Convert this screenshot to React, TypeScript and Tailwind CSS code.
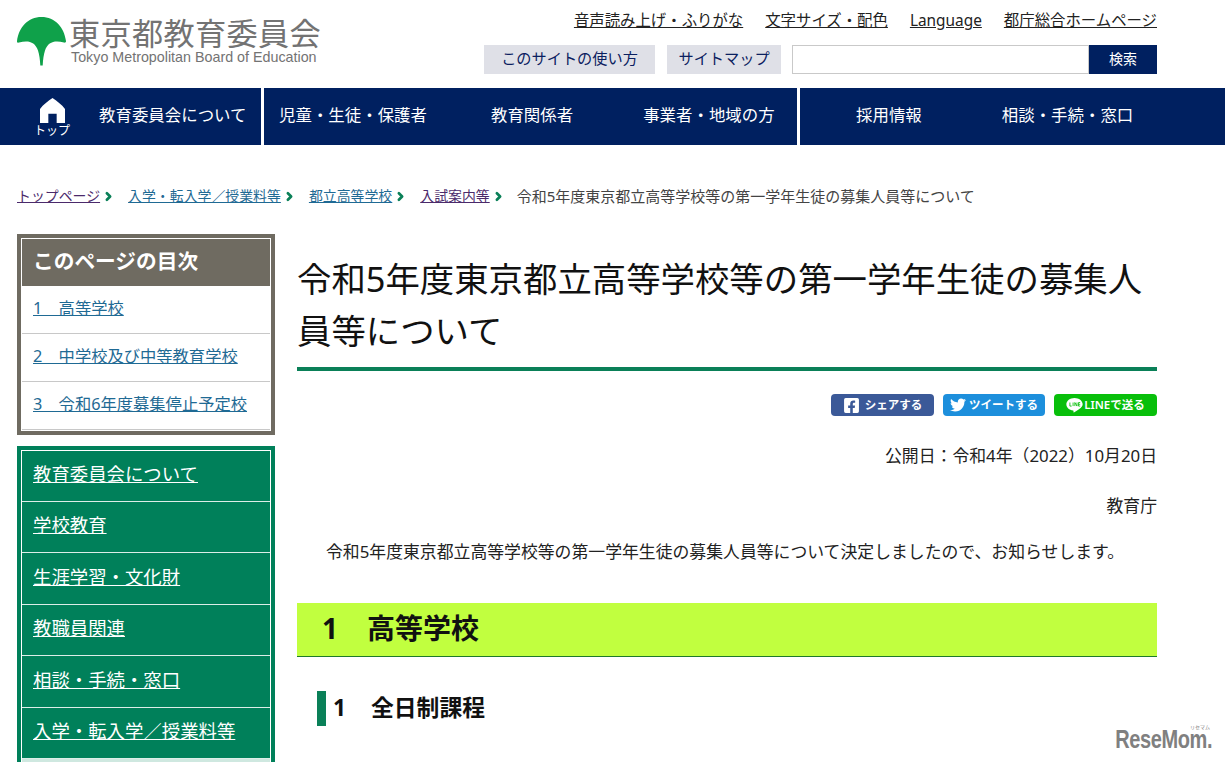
import { ChevronRight } from "lucide-react";
import { FaFacebookSquare, FaTwitter } from "react-icons/fa";

const topLinks = ["音声読み上げ・ふりがな", "文字サイズ・配色", "Language", "都庁総合ホームページ"];
const tocItems = ["1　高等学校", "2　中学校及び中等教育学校", "3　令和6年度募集停止予定校"];
const sideItems = ["教育委員会について", "学校教育", "生涯学習・文化財", "教職員関連", "相談・手続・窓口", "入学・転入学／授業料等"];

const crumbs = [
  { label: "トップページ", color: "text-[#4b2a6b]" },
  { label: "入学・転入学／授業料等", color: "text-[#1f6a94]" },
  { label: "都立高等学校", color: "text-[#1f6a94]" },
  { label: "入試案内等", color: "text-[#4b2a6b]" },
];

function Logo() {
  return (
    <div className="flex items-start pt-[16px]">
      <svg width="50" height="50" viewBox="0 0 50 50" className="shrink-0">
        <path d="M24.5 1C11 1 2 11 0 25c-.2 1.4.8 1.9 2 1.6 9-2.400 16-1 19 8 1.300 4 2 9 2.300 15h2.400c.3-6 1-11 2.300-15 3-9 10-10.400 19-8 1.200.3 2.200-.2 2-1.600C47 11 38 1 24.500 1z" fill="#0fa14a" />
      </svg>
      <div className="ml-[2px] flex flex-col">
        <span className="h-[31px] text-[31.200px] leading-[31px] tracking-[0.3px] text-[#737373] whitespace-nowrap font-['Noto_Sans_CJK_JP',sans-serif]">
          東京都教育委員会
        </span>
        <span className="mt-[2px] ml-[2px] text-[14.300px] leading-[16px] text-[#737373] whitespace-nowrap font-['Liberation_Sans',sans-serif]">
          Tokyo Metropolitan Board of Education
        </span>
      </div>
    </div>
  );
}

function Header() {
  return (
    <header className="flex h-[88px] justify-between pl-[17px] pr-[68px]">
      <Logo />
      <div className="flex flex-col items-end">
        <div className="mt-[10px] flex h-[22px] items-center gap-[22px] text-[15.400px] leading-[22px] text-[#222]">
          {topLinks.map((l) => (
            <a key={l} className="underline whitespace-nowrap">{l}</a>
          ))}
        </div>
        <div className="mt-[13px] flex h-[29px] items-stretch">
          <a className="flex w-[171px] items-center justify-center bg-[#dfe0e7] pb-[2px] text-[15.200px] text-[#0b2060]">このサイトの使い方</a>
          <a className="ml-[12px] flex w-[114px] items-center justify-center bg-[#dfe0e7] pb-[2px] text-[15.200px] text-[#0b2060]">サイトマップ</a>
          <div className="ml-[11px] w-[297px] border border-[#c9c9c9] bg-white" />
          <button className="flex w-[68px] items-center justify-center bg-[#002060] pb-[3px] text-[14px] text-white">検索</button>
        </div>
      </div>
    </header>
  );
}

function HomeIcon() {
  return (
    <svg width="25" height="25" viewBox="0 0 24 24">
      <path d="M12 0 C8 3 3 6 0 10.500 V24 H8 V15 H16 V24 H24 V10.500 C21 6 16 3 12 0 Z" fill="#fff" />
    </svg>
  );
}

function LineIcon() {
  return (
    <svg width="17" height="16" viewBox="0 0 24 22">
      <path d="M12 1C5.700 1 .5 5 .5 10c0 4.500 4 8.200 9.500 8.900.8.200.7 1 .5 2.100 0 .6.500.7 1.200.3 3.500-2 9-5.600 11-8.600.6-1 .8-1.800.8-2.700C23.500 5 18.300 1 12 1z" fill="#fff" />
      <path d="M5.500 7.500v5h2.500M10 7.500v5M12.500 12.500v-5l3 5v-5M20 7.500h-2.300v5H20M17.700 10H20" fill="none" stroke="#08bf0b" strokeWidth="1.200" />
    </svg>
  );
}

function Nav() {
  return (
    <nav className="flex h-[57px] gap-[3px] text-[16.450px] text-white">
      <div className="flex w-[261px] items-center bg-[#002060] pb-[2px]">
        <div className="ml-[34px] flex w-[36px] flex-col items-center pt-[4px]">
          <HomeIcon />
          <span className="mt-[1px] text-[12px] leading-[14px] whitespace-nowrap">トップ</span>
        </div>
        <span className="ml-[29px] whitespace-nowrap">教育委員会について</span>
      </div>
      <div className="flex w-[533px] items-center bg-[#002060] pb-[2px] pl-[15px]">
        <span className="whitespace-nowrap">児童・生徒・保護者</span>
        <span className="ml-[64px] whitespace-nowrap">教育関係者</span>
        <span className="ml-[70px] whitespace-nowrap">事業者・地域の方</span>
      </div>
      <div className="flex flex-1 items-center bg-[#002060] pb-[2px] pl-[56px]">
        <span className="whitespace-nowrap">採用情報</span>
        <span className="ml-[80px] whitespace-nowrap">相談・手続・窓口</span>
      </div>
    </nav>
  );
}

function Breadcrumb() {
  return (
    <div className="mt-[40px] flex h-[22px] items-center pl-[17px] text-[13.900px] leading-[22px] text-[#444]">
      {crumbs.map((c) => (
        <div key={c.label} className="mr-[13px] flex items-center">
          <a className={`underline whitespace-nowrap ${c.color}`}>{c.label}</a>
          <ChevronRight size={13} strokeWidth={5} className="ml-[2px] text-[#0a8058]" />
        </div>
      ))}
      <span className="-ml-px text-[15px] whitespace-nowrap">令和5年度東京都立高等学校等の第一学年生徒の募集人員等について</span>
    </div>
  );
}

function Sidebar() {
  return (
    <aside className="w-[258px] shrink-0">
      <div className="border-4 border-[#6f6b61] bg-white p-px">
        <div className="flex h-[47px] items-center bg-[#6f6b61] pb-[2px] pl-[11px] text-[20.700px] font-bold text-white">
          このページの目次
        </div>
        {tocItems.map((t) => (
          <div key={t} className="flex h-[48px] items-center border-b border-[#c8c8c8] pb-[2px] pl-[11px] text-[16.300px]">
            <a className="underline text-[#1f6a94] whitespace-nowrap">{t}</a>
          </div>
        ))}
      </div>
      <div className="mt-[11px] border-4 border-[#00805a] bg-[#00805a]">
        <div className="border border-white">
          {sideItems.map((s) => (
            <div key={s} className="flex h-[51.500px] items-center border-b border-[#dceee8] pb-[3px] pl-[11px] text-[18.400px] text-white first:h-[50.500px]">
              <a className="underline whitespace-nowrap">{s}</a>
            </div>
          ))}
          <div className="h-[51px] bg-[#cfe8e0]" />
        </div>
      </div>
    </aside>
  );
}

function ShareButtons() {
  return (
    <div className="mt-[23px] flex justify-end gap-[9px] text-[11.500px] font-semibold text-white">
      <a className="flex h-[22px] w-[103px] items-center justify-center gap-[5px] rounded-[4px] bg-[#3b5998]">
        <FaFacebookSquare size={17} />
        シェアする
      </a>
      <a className="flex h-[22px] w-[102px] items-center justify-center gap-[3px] rounded-[4px] bg-[#1d8fdc]">
        <FaTwitter size={16} />
        ツイートする
      </a>
      <a className="flex h-[22px] w-[103px] items-center justify-center gap-[1px] rounded-[4px] bg-[#08bf0b]">
        <LineIcon />
        LINEで送る
      </a>
    </div>
  );
}

function Main() {
  return (
    <main className="ml-[22px] w-[860px] text-[16.850px] leading-[24px] text-[#222]">
      <h1 className="mt-[19px] border-b-4 border-[#0a8058] pb-[10px] text-[34.400px] leading-[52px] font-normal text-[#111]">
        令和5年度東京都立高等学校等の第一学年生徒の募集人員等について
      </h1>
      <ShareButtons />
      <p className="mt-[28px] text-right">公開日：令和4年（2022）10月20日</p>
      <p className="mt-[26px] text-right">教育庁</p>
      <p className="mt-[22px] pl-[29px] whitespace-nowrap">令和5年度東京都立高等学校等の第一学年生徒の募集人員等について決定しましたので、お知らせします。</p>
      <h2 className="mt-[39px] flex h-[54px] items-center border-b border-[#1d7a2a] bg-[#c1ff3f] pb-[4px] pl-[25px] text-[28px] font-bold text-[#111]">
        <span className="w-[45px]">1</span>高等学校
      </h2>
      <h3 className="mt-[34px] ml-[20px] flex h-[35px] items-center border-l-[9px] border-[#0a8058] pb-[2px] pl-[7px] text-[22.800px] font-bold text-[#111]">
        <span className="w-[38px]">1</span>全日制課程
      </h3>
    </main>
  );
}

export default function App() {
  return (
    <div className="relative h-[762px] w-[1225px] overflow-hidden bg-white font-['Noto_Sans','Noto_Sans_CJK_JP',sans-serif]">
      <Header />
      <Nav />
      <Breadcrumb />
      <div className="mt-[27px] flex pl-[17px]">
        <Sidebar />
        <Main />
      </div>
      <div className="absolute right-[13px] top-[730px] font-['Liberation_Sans',sans-serif] text-[#808080]">
        <span className="absolute right-[2px] top-[-6px] text-[5px] leading-[5px] whitespace-nowrap font-['Noto_Sans_CJK_JP',sans-serif]">リセマム</span>
        <span className="block origin-right scale-x-[0.8] text-[25px] leading-[18px] font-bold tracking-[-0.5px] whitespace-nowrap">ReseMom.</span>
      </div>
    </div>
  );
}
